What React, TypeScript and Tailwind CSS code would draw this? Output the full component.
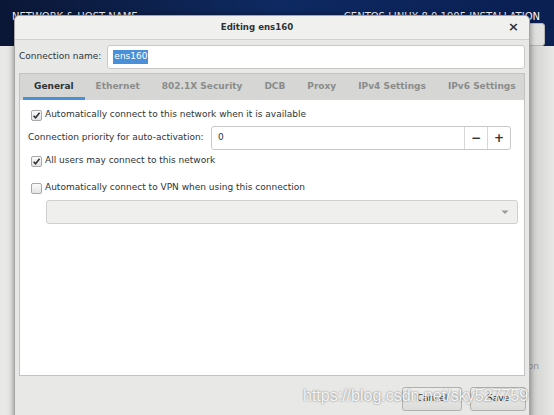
import React from 'react';

const tabs = ['General', 'Ethernet', '802.1X Security', 'DCB', 'Proxy', 'IPv4 Settings', 'IPv6 Settings'];

function Check({ checked }: { checked?: boolean }) {
  return (
    <span className="w-[11px] h-[11px] border border-[#a8a8a8] rounded-[2px] bg-gradient-to-b from-[#fbfbfb] to-[#e4e4e4] flex items-center justify-center shrink-0">
      {checked && (
        <svg width="9" height="9" viewBox="0 0 10 10">
          <path d="M1.8 5.2 L4 7.6 L8.4 2" fill="none" stroke="#2e3436" strokeWidth="1.8" />
        </svg>
      )}
    </span>
  );
}

export default function App() {
  return (
    <div className="relative w-[554px] h-[415px] overflow-hidden bg-[#e8e8e7] font-['DejaVu_Sans',sans-serif] text-[9px] text-[#2e3436] whitespace-nowrap">
      {/* installer backdrop */}
      <div className="h-[46px] bg-gradient-to-r from-[#0b1736] via-[#0e2a62] to-[#0a1f52] flex justify-between pl-[12px] pr-[14px] pt-[9px] text-white text-[10px]">
        <span>NETWORK &amp; HOST NAME</span>
        <span>CENTOS LINUX 8.0.1905 INSTALLATION</span>
      </div>
      <div className="absolute right-[9px] top-[23px] w-[20px] h-[23px] rounded-[3px] bg-[#e0e0df] border border-[#b5b5b5]" />
      <div className="absolute right-0 top-[46px] w-[24px] h-[369px] bg-gradient-to-r from-[#cfcfce] to-[#e8e8e7]" />
      <div className="absolute right-[15px] top-[360px] text-[#909090] text-[9px]">on</div>

      {/* dialog */}
      <div className="absolute left-[14px] top-[15px] w-[516px] h-[420px] bg-[#e8e8e7] border border-[#a5a5a5] rounded-t-[5px] shadow-[0_0_6px_rgba(0,0,0,0.45)] flex flex-col">
        <div className="h-[24px] bg-[#f0f0ef] rounded-t-[5px] border-b border-[#d0d0cf] flex items-center justify-center pr-[30px] relative">
          <span className="font-bold text-[#2e3436] text-[8.6px]">Editing ens160</span>
          <span className="absolute right-[10px] top-[4px] text-[13px] font-bold leading-none">×</span>
        </div>

        <div className="flex items-center pl-[4px] pr-[4px] pt-[5px] gap-[6px]">
          <span>Connection name:</span>
          <div className="flex-1 h-[24px] bg-white border border-[#c8c8c7] rounded-[3px] flex items-center px-[5px]">
            <span className="bg-[#4a90d9] text-white px-[1px]">ens160</span>
          </div>
        </div>

        <div className="mx-[4px] mt-[4px] h-[303px] border border-[#c2c2c1] bg-white flex flex-col">
          <div className="h-[26px] bg-[#d6d6d5] flex items-stretch pl-[3px] font-bold">
            {tabs.map((t, i) => (
              <div
                key={t}
                className={
                  'px-[11px] flex items-center ' +
                  (i === 0 ? 'text-[#2e3436] border-b-[3px] border-[#4a90d9] pt-[3px]' : 'text-[#8a8c8a]')
                }
              >
                {t}
              </div>
            ))}
          </div>

          <div className="flex flex-col pl-[11px] pr-[6px] pt-[9px]">
            <div className="flex items-center gap-[3px] h-[12px]">
              <Check checked />
              <span>Automatically connect to this network when it is available</span>
            </div>
            <div className="flex items-center mt-[5px] -ml-[3px]">
              <span className="w-[183px]">Connection priority for auto-activation:</span>
              <div className="w-[300px] h-[24px] bg-white border border-[#c8c8c7] rounded-[3px] flex items-stretch">
                <span className="flex-1 flex items-center px-[6px]">0</span>
                <span className="w-[23px] border-l border-[#d8d8d8] flex items-center justify-center text-[12px] font-bold">−</span>
                <span className="w-[23px] border-l border-[#d8d8d8] flex items-center justify-center text-[12px] font-bold">+</span>
              </div>
            </div>
            <div className="flex items-center gap-[3px] mt-[5px] h-[12px]">
              <Check checked />
              <span>All users may connect to this network</span>
            </div>
            <div className="flex items-center gap-[3px] mt-[15px] h-[12px]">
              <Check />
              <span>Automatically connect to VPN when using this connection</span>
            </div>
            <div className="ml-[15px] mt-[6px] h-[24px] bg-[#efefee] border border-[#cfcfce] rounded-[3px] flex items-center justify-end pr-[8px]">
              <svg width="8" height="5" viewBox="0 0 8 5">
                <path d="M0.5 0.5 L4 4 L7.5 0.5 Z" fill="#9a9a9a" />
              </svg>
            </div>
          </div>
        </div>

        <div className="flex justify-end gap-[8px] pr-[3px] pt-[11px]">
          <button className="w-[60px] h-[24px] border border-[#b0b0af] rounded-[3px] bg-gradient-to-b from-[#ededec] to-[#dcdcdb] text-[#2e3436]">Cancel</button>
          <button className="w-[56px] h-[24px] border border-[#b0b0af] rounded-[3px] bg-gradient-to-b from-[#ededec] to-[#dcdcdb] text-[#2e3436]">Save</button>
        </div>
      </div>

      {/* watermark */}
      <div className="absolute left-[303px] top-[384px] text-[16px] font-['Liberation_Sans',sans-serif] text-white/90 [text-shadow:0_0_2px_rgba(0,0,0,0.55)]">
        https://blog.csdn.net/sky527759
      </div>
    </div>
  );
}
